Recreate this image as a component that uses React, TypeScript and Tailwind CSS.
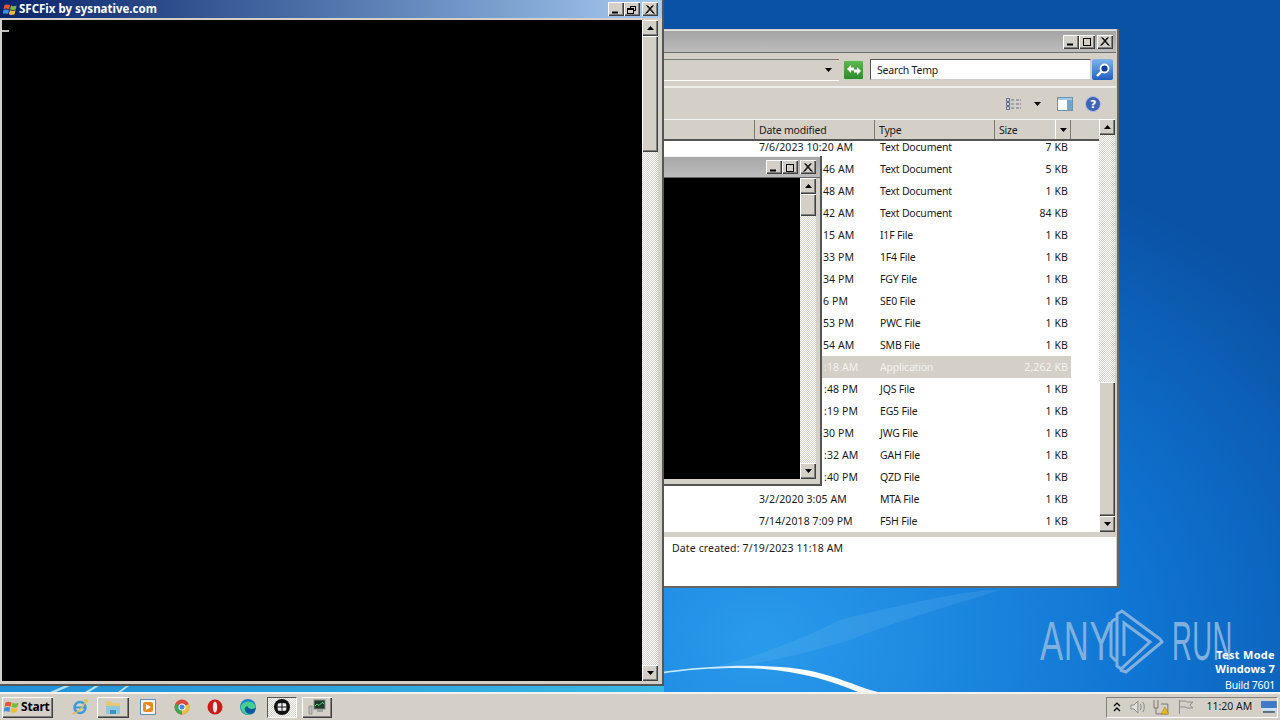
import React from 'react';

const raised = 'bg-[#d4d0c8] shadow-[inset_1px_1px_0_#fff,inset_-1px_-1px_0_#404040,inset_-2px_-2px_0_#808080]';
const dither = 'bg-[repeating-conic-gradient(#d4d0c8_0_25%,#fff_0_50%)] bg-[length:2px_2px]';

const rows = [
    { date: '7/6/2023 10:20 AM', pad: '', type: 'Text Document', size: '7 KB' },
    { date: '46 AM', pad: 'pl-[64px]', type: 'Text Document', size: '5 KB' },
    { date: '48 AM', pad: 'pl-[64px]', type: 'Text Document', size: '1 KB' },
    { date: '42 AM', pad: 'pl-[64px]', type: 'Text Document', size: '84 KB' },
    { date: '15 AM', pad: 'pl-[64px]', type: 'I1F File', size: '1 KB' },
    { date: '33 PM', pad: 'pl-[64px]', type: '1F4 File', size: '1 KB' },
    { date: '34 PM', pad: 'pl-[64px]', type: 'FGY File', size: '1 KB' },
    { date: '6 PM', pad: 'pl-[64px]', type: 'SE0 File', size: '1 KB' },
    { date: '53 PM', pad: 'pl-[64px]', type: 'PWC File', size: '1 KB' },
    { date: '54 AM', pad: 'pl-[64px]', type: 'SMB File', size: '1 KB' },
    { date: ':18 AM', pad: 'pl-[65px]', type: 'Application', size: '2,262 KB', selected: true },
    { date: ':48 PM', pad: 'pl-[65px]', type: 'JQS File', size: '1 KB' },
    { date: ':19 PM', pad: 'pl-[65px]', type: 'EG5 File', size: '1 KB' },
    { date: '30 PM', pad: 'pl-[64px]', type: 'JWG File', size: '1 KB' },
    { date: ':32 AM', pad: 'pl-[65px]', type: 'GAH File', size: '1 KB' },
    { date: ':40 PM', pad: 'pl-[65px]', type: 'QZD File', size: '1 KB' },
    { date: '3/2/2020 3:05 AM', pad: '', type: 'MTA File', size: '1 KB' },
    { date: '7/14/2018 7:09 PM', pad: '', type: 'F5H File', size: '1 KB' },
];

const Arrow = ({ down = false }: { down?: boolean }) => (
    <svg width="7" height="4" viewBox="0 0 7 4">
        <path d={down ? 'M0 0h7L3.5 4z' : 'M0 4h7L3.5 0z'} fill="#000" />
    </svg>
);

const ScrollButton = ({ down = false }: { down?: boolean }) => (
    <div className={`${raised} w-4 h-4 flex items-center justify-center shrink-0`}>
        <Arrow down={down} />
    </div>
);

const CaptionButton = ({ kind }: { kind: 'min' | 'max' | 'restore' | 'close' }) => (
    <div className={`${raised} w-4 h-[14px] flex items-center justify-center`}>
        <svg width="10" height="9" viewBox="0 0 10 9" fill="none" stroke="#000">
            {kind === 'min' && <path d="M1 7.5h6" strokeWidth="2" />}
            {kind === 'max' && <path d="M1 1.5h8M1.5 1v7.5M8.5 1v7.5M1 8.5h8" />}
            {kind === 'restore' && <path d="M3 1.5h6M3.5 1v2M8.5 1v4M7 5.5h2M0.5 3.5h6M1 4.5h5M.5 3v5.500M6.500 3v5.500M0 8.500h7" />}
            {kind === 'close' && <path d="M1.500 .5l7 8M2.500 .5l7 8M8.500 .5l-7 8M7.500 .5l-7 8" />}
        </svg>
    </div>
);

const Ie = () => (
    <svg width="18" height="18" viewBox="0 0 18 18" fill="none">
        <circle cx="9" cy="9.500" r="5.500" stroke="#3a9be0" strokeWidth="2.500" />
        <path d="M4 9.500h10" stroke="#3a9be0" strokeWidth="2" />
        <path d="M1.500 15c2 2 9-3 13-11" stroke="#e8b93a" strokeWidth="1.500" />
        <path d="M13 2.500c2-1 3.500-.5 3 2" stroke="#e8b93a" strokeWidth="1.500" />
    </svg>
);

const Folder = () => (
    <svg width="18" height="18" viewBox="0 0 18 18">
        <path d="M2 3h5l1 2h8v11H2z" fill="#e9c873" />
        <path d="M2 8h14v8H2z" fill="#8ec8e0" />
        <path d="M6 12h6v4H6z" fill="#3f8fc4" />
    </svg>
);

const Media = () => (
    <svg width="16" height="16" viewBox="0 0 16 16">
        <rect x=".5" y=".5" width="15" height="15" fill="#f4f4f4" stroke="#5d8fc0" />
        <rect x="3" y="3" width="10" height="10" rx="2" fill="#e88a1e" />
        <path d="M6 5l5 3-5 3z" fill="#fff" />
    </svg>
);

const Chrome = () => (
    <svg width="16" height="16" viewBox="0 0 16 16">
        <circle cx="8" cy="8" r="7.500" fill="#d9483b" />
        <path d="M8 8L1.500 4.500A7.500 7.500 0 0 0 8 15.500z" fill="#3aa757" />
        <path d="M8 8l6.800-3A7.500 7.500 0 0 1 8 15.500z" fill="#e8c23a" />
        <circle cx="8" cy="8" r="3.500" fill="#fff" />
        <circle cx="8" cy="8" r="2.500" fill="#4a86e0" />
    </svg>
);

const Opera = () => (
    <svg width="16" height="16" viewBox="0 0 16 16">
        <circle cx="8" cy="8" r="7.500" fill="#cc1a1a" />
        <ellipse cx="8" cy="8" rx="2.200" ry="5.500" fill="#f6e6e6" />
    </svg>
);

const Edge = () => (
    <svg width="18" height="18" viewBox="0 0 18 18">
        <circle cx="9" cy="9" r="8" fill="#1583c9" />
        <path d="M1.500 9C3 3 13 1 16.500 8c.5 2-1 3-4 3-2 0-4-1-4-2.500C6 8 4.500 11 7 14c1.500 2 5 2.500 8 1-4 3.500-12 2-13.500-6z" fill="#48cf8e" />
        <path d="M7 14c-2-2.500-1-6 1.500-5.500 0 1.500 2 2.500 4 2.500 3 0 4.500-1 4-3 .5 3-.5 5.500-1.500 7-3 1.500-6.500 1-8-1z" fill="#0c5a9e" />
    </svg>
);

const WinLogo = ({ size = 16 }: { size?: number }) => (
    <svg width={size} height={size} viewBox="0 0 16 16">
        <path d="M1.500 3.500c2-1 4-1 6 0l-1 4.200c-2-1-4-1-6 0z" fill="#e4572e" />
        <path d="M8.500 3.700c2 1 4 1 6 0l-1 4.200c-2 1-4 1-6 0z" fill="#7db83a" />
        <path d="M.3 8.700c2-1 4-1 6 0l-1 4.200c-2-1-4-1-6 0z" fill="#3c8fdc" />
        <path d="M7.300 8.900c2 1 4 1 6 0l-1 4.200c-2 1-4 1-6 0z" fill="#f2bd2c" />
    </svg>
);

const SfcIcon = () => (
    <svg width="18" height="18" viewBox="0 0 18 18">
        <circle cx="9" cy="9" r="8" fill="#111" />
        <path d="M5 5.500l3.500-.5v3.500H4.500zM9.500 5l3.500.5.500 3h-4zM4.500 9.500h4v3.500l-3.500-.5zM9.500 9.500h4l-.5 3-3.500.5z" fill="#eee" />
    </svg>
);

const TaskMgr = () => (
    <svg width="18" height="16" viewBox="0 0 18 16">
        <rect x="6" y="1" width="11" height="9" fill="#20382c" stroke="#7f8a86" />
        <path d="M7 7l2-2 2 1.500 3-3 2 1" stroke="#4be06a" fill="none" />
        <path d="M9 10h6v3H9z" fill="#9aa3a0" />
        <rect x="1" y="7" width="3" height="8" fill="#b9c0bc" stroke="#5f6a66" strokeWidth=".5" />
    </svg>
);

const Wallpaper = () => (
    <svg className="absolute inset-0" width="1280" height="692" viewBox="0 0 1280 692" fill="none">
        <defs>
            <linearGradient id="swoosh" x1="0" x2="1">
                <stop offset="0" stopColor="#bfe9ff" />
                <stop offset=".7" stopColor="#fff" />
                <stop offset="1" stopColor="#e8f6ff" />
            </linearGradient>
            <linearGradient id="strip" x1="0" x2="1">
                <stop offset="0" stopColor="#1f8fd8" />
                <stop offset="1" stopColor="#3ab8e4" />
            </linearGradient>
        </defs>
        <rect x="0" y="686" width="664" height="6" fill="url(#strip)" />
        <path d="M50 692l14-6h6l-14 6zM85 692l10-6h4l-10 6zM118 692l8-6h3l-8 6z" fill="#d9f2ff" opacity=".8" />
        <path d="M660 672C720 664 790 662 830 676 852 683 868 690 878 692H858C830 680 790 668 740 668 710 668 684 670 660 674z" fill="url(#swoosh)" />
        <path d="M840 620C920 600 970 590 1000 590 950 606 900 620 850 640 800 655 760 665 700 670 750 660 800 640 840 620z" fill="#8fd0f8" opacity=".14" />
    </svg>
);

const AnyRun = () => (
    <div className="absolute left-[1040px] top-[608px] w-[195px] h-[66px] flex items-center text-[#7fb0de]">
        <span className="w-[68px] font-['Liberation_Sans',sans-serif] text-[56px] leading-none origin-left scale-x-[.62] tracking-[1px]">ANY</span>
        <svg className="shrink-0" width="58" height="66" viewBox="0 0 58 66" fill="none" stroke="#7fb0de" strokeWidth="3">
            <path d="M10 11C4 11 3 14 3 18v30l5 5M12 62l6 2 36-30-2-3L14 3l-5 3v52l4 3 29-27L16 15v33" />
        </svg>
        <span className="ml-[6px] w-[62px] font-['Liberation_Sans',sans-serif] text-[56px] leading-none origin-left scale-x-[.49] tracking-[1px]">RUN</span>
    </div>
);

const ExplorerWindow = () => (
    <div className="absolute left-[663px] top-[29px] w-[456px] h-[559px] bg-[#d4d0c8] border-r-2 border-b-2 border-[#666] flex flex-col pr-px">
        <div className="h-[23px] mt-px border-t border-[#e8e8e8] border-b border-b-[#6e6e6e] bg-gradient-to-b from-[#a4a4a4] to-[#bdbdbd] flex justify-end items-center gap-0 pr-[3px] shrink-0">
            <CaptionButton kind="min" />
            <CaptionButton kind="max" />
            <div className="ml-[2px]"><CaptionButton kind="close" /></div>
        </div>
        <div className="h-[35px] flex items-center border-b-2 border-[#eeeeea] shrink-0">
            <div className="w-[176px] h-[22px] border-t border-[#7a7a74] border-b border-b-white flex items-center justify-end pr-[7px] mt-[1px]">
                <Arrow down />
            </div>
            <div className="ml-[4px] w-[21px] h-[20px] rounded-[2px] bg-gradient-to-b from-[#5cb84f] to-[#2e8a2c] border border-[#bfd9b9] flex items-center justify-center">
                <svg width="14" height="10" viewBox="0 0 14 10" fill="#fff">
                    <path d="M0 4l4-4v2.500h3v3H4V8zM14 6l-4 4V7.500H7v-3h3V2z" />
                </svg>
            </div>
            <div className="ml-[6px] w-[221px] h-[21px] bg-white border-t border-l border-[#555] border-r border-r-[#ccc] border-b border-b-[#ccc] flex items-center pl-[6px] pt-[2px]">
                Search Temp
            </div>
            <div className="ml-[1px] w-[21px] h-[21px] rounded-[2px] bg-gradient-to-b from-[#7fb5ea] to-[#1f5fc0] flex items-center justify-center">
                <svg width="16" height="16" viewBox="0 0 16 16" fill="none">
                    <circle cx="9.500" cy="6.500" r="4" fill="#0f3f96" stroke="#fff" strokeWidth="1.800" />
                    <path d="M6.500 9.500L2 14" stroke="#fff" strokeWidth="2.400" />
                </svg>
            </div>
        </div>
        <div className="h-[31px] flex items-center justify-end pr-[15px] shrink-0">
            <svg width="16" height="14" viewBox="0 0 16 14" fill="none" stroke="#5f6f88">
                <path d="M.5 1.500h3v3h-3zM.5 5.500h3v3h-3zM.5 9.500h3v3h-3z" />
                <path d="M5 3h4M10 3h5M5 7h4M10 7h5M5 11h4M10 11h5" strokeDasharray="3 1" />
            </svg>
            <div className="ml-[12px]"><Arrow down /></div>
            <svg className="ml-[16px]" width="16" height="14" viewBox="0 0 16 14">
                <rect x=".5" y=".5" width="15" height="13" fill="#fff" stroke="#6f93ad" />
                <rect x="1" y="1" width="14" height="2" fill="#a6c8de" />
                <rect x="10" y="3" width="5" height="10" fill="#6fa6cf" />
            </svg>
            <svg className="ml-[12px]" width="16" height="16" viewBox="0 0 16 16">
                <circle cx="8" cy="8" r="7.500" fill="#3f63b8" stroke="#a9bde6" />
                <text x="8" y="12" fontSize="11" fontWeight="700" textAnchor="middle" fill="#fff" fontFamily="'DejaVu Sans',sans-serif">?</text>
            </svg>
        </div>
        <div className="flex-1 flex min-h-0 relative">
            <div className="w-[436px] flex flex-col bg-white">
                <div className="h-[22px] flex shrink-0 bg-[#d4d0c8] border-t border-[#f2f2ee] border-b-2 border-b-[#555] leading-[21px]">
                    <div className="w-[92px] border-r border-[#7a7a74]" />
                    <div className="w-[120px] border-r border-[#7a7a74] pl-[4px]">Date modified</div>
                    <div className="w-[120px] border-r border-[#7a7a74] pl-[4px]">Type</div>
                    <div className="w-[61px] pl-[4px] border-r border-white">Size</div>
                    <div className="w-[15px] border-r border-[#7a7a74] flex items-center justify-center"><Arrow down /></div>
                </div>
                <div className="h-[391px] overflow-hidden -mt-[5px]">
                    {rows.map((row) => (
                        <div key={row.type + row.size} className={`h-[22px] flex leading-[22px] w-[408px] ${row.selected ? 'text-[#f4f2ec]' : ''}`}>
                            <div className="w-[96px]" />
                            <div className={`w-[121px] whitespace-nowrap tracking-[0.1px] ${row.pad} ${row.selected ? 'bg-[#d4d0c8]' : ''}`}>{row.date}</div>
                            <div className={`w-[120px] ${row.selected ? 'bg-[#d4d0c8]' : ''}`}>{row.type}</div>
                            <div className={`w-[71px] text-right pr-[3px] tracking-[0.1px] ${row.selected ? 'bg-[#d4d0c8]' : ''}`}>{row.size}</div>
                        </div>
                    ))}
                </div>
            </div>
            <div className={`w-4 ml-auto mr-[1px] flex flex-col ${dither}`}>
                <ScrollButton />
                <div className="flex-1 flex flex-col justify-end">
                    <div className={`${raised} h-[134px]`} />
                </div>
                <ScrollButton down />
            </div>
        </div>
        <div className="h-[49px] mt-[5px] bg-white pl-[9px] pt-[4px] shrink-0 tracking-[0.13px]">Date created: 7/19/2023 11:18 AM</div>
    </div>
);

const InnerConsole = () => (
    <div className="absolute left-[664px] top-[156px] w-[158px] h-[330px] bg-[#d4d0c8] border-r-2 border-b-2 border-[#555] flex flex-col">
        <div className="h-[22px] border-t border-[#eee] border-b border-b-[#666] bg-gradient-to-b from-[#a8a8a8] to-[#bcbcbc] flex justify-end items-center pr-[4px] shrink-0">
            <CaptionButton kind="min" />
            <CaptionButton kind="max" />
            <div className="ml-[2px]"><CaptionButton kind="close" /></div>
        </div>
        <div className="flex-1 flex min-h-0 pb-[5px]">
            <div className="w-[136px] bg-black" />
            <div className={`w-4 flex flex-col ${dither}`}>
                <ScrollButton />
                <div className={`${raised} h-[22px]`} />
                <div className="flex-1" />
                <ScrollButton down />
            </div>
        </div>
    </div>
);

const SfcWindow = () => (
    <div className="absolute left-0 top-0 w-[664px] h-[686px] bg-[#d4d0c8] border-r-2 border-b-2 border-[#555] flex flex-col pl-[2px] pr-[3px]">
        <div className="-ml-[2px] -mr-[3px] h-[18px] mb-[2px] bg-gradient-to-r from-[#0a246a] to-[#a6caf0] flex items-center pl-[3px] pr-[4px] shrink-0">
            <WinLogo size={15} />
            <span className="ml-px text-white font-bold font-['Noto_Sans',sans-serif] text-[11.5px] tracking-[0px] leading-none">SFCFix by sysnative.com</span>
            <div className="ml-auto flex">
                <CaptionButton kind="min" />
                <CaptionButton kind="restore" />
                <div className="ml-[2px]"><CaptionButton kind="close" /></div>
            </div>
        </div>
        <div className="flex-1 flex min-h-0 pb-[3px]">
            <div className="w-[640px] bg-black pt-[10px]">
                <div className="w-[7px] h-[2px] bg-[#c0c0c0]" />
            </div>
            <div className={`w-4 flex flex-col ${dither}`}>
                <ScrollButton />
                <div className={`${raised} h-[116px]`} />
                <div className="flex-1" />
                <ScrollButton down />
            </div>
        </div>
    </div>
);

const App: React.FC = () => {
    return (
        <div className="w-[1280px] h-[720px] overflow-hidden flex flex-col font-['Noto_Sans',sans-serif] text-[10.5px] tracking-[-0.2px] text-[#1a1a1a]">
            <div className="relative flex-1 bg-[radial-gradient(ellipse_700px_520px_at_760px_640px,#2a9bec_0%,#0f74d2_55%,#0a52a6_100%)]">
                <Wallpaper />
                <AnyRun />
                <ExplorerWindow />
                <InnerConsole />
                <SfcWindow />
                <div className="absolute right-[5px] top-[648px] text-right text-white text-[11px] leading-[14px]">
                    <div className="font-bold tracking-[0.3px]">Test Mode</div>
                    <div className="font-bold tracking-[0.1px]">Windows 7</div>
                    <div className="mt-[2px] text-[10.5px]">Build 7601</div>
                </div>
            </div>
            <div className="h-[28px] bg-[#d4d0c8] border-t-2 border-[#f4f2ec] flex items-center pl-[2px] pr-[2px] shrink-0">
                <div className={`${raised} w-[51px] h-[21px] flex items-center pl-[2px] gap-px font-bold text-[12px] text-black`}>
                    <WinLogo />
                    Start
                </div>
                <div className="ml-[18px] w-[18px] flex justify-center"><Ie /></div>
                <div className={`${raised} ml-[8px] w-[32px] h-[21px] flex items-center justify-center`}><Folder /></div>
                <div className="ml-[11px] w-4 flex justify-center"><Media /></div>
                <div className="ml-[18px] w-4 flex justify-center"><Chrome /></div>
                <div className="ml-[17px] w-4 flex justify-center"><Opera /></div>
                <div className="ml-[16px] w-[18px] flex justify-center"><Edge /></div>
                <div className={`ml-[10px] w-[30px] h-[21px] flex items-center justify-center border-t border-l border-[#555] border-r border-r-white border-b border-b-white ${dither}`}><SfcIcon /></div>
                <div className={`${raised} ml-[5px] w-[30px] h-[21px] flex items-center justify-center`}><TaskMgr /></div>
                <div className="ml-auto w-[172px] h-[21px] border-t border-l border-[#808080] border-r border-r-white border-b border-b-white flex items-center text-[#1a1a1a]">
                    <svg className="ml-[6px]" width="8" height="10" viewBox="0 0 8 10" fill="none" stroke="#000" strokeWidth="1.300">
                        <path d="M1 4l3-3 3 3M1 9l3-3 3 3" />
                    </svg>
                    <svg className="ml-[8px]" width="18" height="16" viewBox="0 0 18 16" fill="none" stroke="#8d8d88">
                        <path d="M2 6h3l4-4v12l-4-4H2z" fill="#e2e0da" />
                        <path d="M11.500 5c1 2 1 4 0 6M14 3c2 3 2 7 0 10" />
                    </svg>
                    <svg className="ml-[6px]" width="18" height="16" viewBox="0 0 18 16" fill="none">
                        <path d="M1 1v8h4V1M3 9v6h12V5H8" stroke="#77776f" />
                        <path d="M8 15l4-7 4 7z" fill="#e8b71c" stroke="#9a7a10" strokeWidth=".5" />
                    </svg>
                    <svg className="ml-[7px]" width="16" height="16" viewBox="0 0 16 16" fill="none" stroke="#8d8d88">
                        <path d="M1.500 1v14M2 2h6l1 1h6l-3 3 3 3H9L8 8H2" />
                    </svg>
                    <span className="ml-[13px] whitespace-nowrap tracking-[0px]">11:20 AM</span>
                    <svg className="ml-[9px]" width="16" height="14" viewBox="0 0 16 14">
                        <rect x="0" y="1" width="16" height="10" fill="#3f78c4" />
                        <rect x="0" y="8" width="16" height="3" fill="#cfe0f2" />
                        <rect x="2" y="11" width="12" height="2" fill="#5e6e80" />
                    </svg>
                </div>
            </div>
        </div>
    );
};

export default App;
